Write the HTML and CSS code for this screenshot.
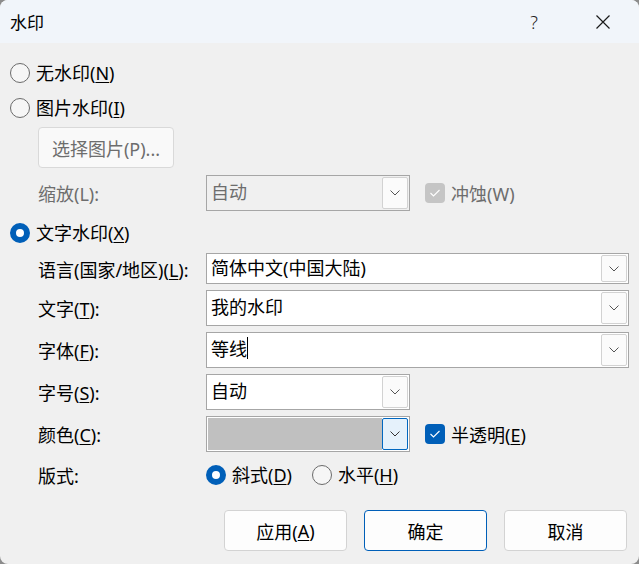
FILE: index.html
```html
<!DOCTYPE html>
<html lang="zh-CN">
<head>
<meta charset="utf-8">
<title>水印</title>
<link rel="stylesheet" href="styles.css">
</head>
<body>
<div class="window">
  <div class="titlebar">
    <span class="title">水印</span>
    <span class="help">?</span>
    <span class="close">
      <svg width="16" height="16" viewBox="0 0 16 16"><path d="M1.5 1.5 L14.5 14.5 M14.5 1.5 L1.5 14.5" stroke="#1a1a1a" stroke-width="1.2" fill="none"/></svg>
    </span>
  </div>

  <div class="content">
    <div class="opt-row r1"><span class="radio"></span><span class="opt-text">无水印(<u>N</u>)</span></div>
    <div class="opt-row r2"><span class="radio"></span><span class="opt-text">图片水印(<u>I</u>)</span></div>

    <div class="pic-row"><span class="btn btn-disabled pic-btn">选择图片(P)...</span></div>

    <div class="form-row scale-row">
      <span class="label disabled">缩放(L):</span>
      <div class="combo narrow disabled-combo">
        <span class="combo-text">自动</span>
        <span class="drop"><svg width="10" height="6" viewBox="0 0 10 6"><path d="M0.5 0.5 L5 5 L9.5 0.5" stroke="#555" stroke-width="1" fill="none"/></svg></span>
      </div>
      <span class="check check-disabled"><svg width="12" height="10" viewBox="0 0 12 10"><path d="M1.5 5 L4.5 8 L10.5 2" stroke="#fff" stroke-width="1.1" fill="none"/></svg></span>
      <span class="check-text disabled">冲蚀(W)</span>
    </div>

    <div class="opt-row r3"><span class="radio on"></span><span class="opt-text">文字水印(<u>X</u>)</span></div>

    <div class="form-row lang-row">
      <span class="label">语言(国家/地区)(<u>L</u>):</span>
      <div class="combo wide short">
        <span class="combo-text">简体中文(中国大陆)</span>
        <span class="drop"><svg width="10" height="6" viewBox="0 0 10 6"><path d="M0.5 0.5 L5 5 L9.5 0.5" stroke="#555" stroke-width="1" fill="none"/></svg></span>
      </div>
    </div>

    <div class="form-row field-row">
      <span class="label">文字(<u>T</u>):</span>
      <div class="combo wide">
        <span class="combo-text">我的水印</span>
        <span class="drop"><svg width="10" height="6" viewBox="0 0 10 6"><path d="M0.5 0.5 L5 5 L9.5 0.5" stroke="#555" stroke-width="1" fill="none"/></svg></span>
      </div>
    </div>

    <div class="form-row field-row">
      <span class="label">字体(<u>F</u>):</span>
      <div class="combo wide">
        <span class="combo-text">等线<span class="caret"></span></span>
        <span class="drop"><svg width="10" height="6" viewBox="0 0 10 6"><path d="M0.5 0.5 L5 5 L9.5 0.5" stroke="#555" stroke-width="1" fill="none"/></svg></span>
      </div>
    </div>

    <div class="form-row field-row">
      <span class="label">字号(<u>S</u>):</span>
      <div class="combo narrow">
        <span class="combo-text">自动</span>
        <span class="drop"><svg width="10" height="6" viewBox="0 0 10 6"><path d="M0.5 0.5 L5 5 L9.5 0.5" stroke="#555" stroke-width="1" fill="none"/></svg></span>
      </div>
    </div>

    <div class="form-row field-row">
      <span class="label">颜色(<u>C</u>):</span>
      <div class="combo narrow color-combo">
        <span class="swatch"></span>
        <span class="drop focused"><svg width="10" height="6" viewBox="0 0 10 6"><path d="M0.5 0.5 L5 5 L9.5 0.5" stroke="#333" stroke-width="1" fill="none"/></svg></span>
      </div>
      <span class="check check-on"><svg width="12" height="10" viewBox="0 0 12 10"><path d="M1.5 5 L4.5 8 L10.5 2" stroke="#fff" stroke-width="1.1" fill="none"/></svg></span>
      <span class="check-text">半透明(<u>E</u>)</span>
    </div>

    <div class="form-row layout-row">
      <span class="label">版式:</span>
      <span class="radio on"></span><span class="opt-text">斜式(<u>D</u>)</span>
      <span class="radio second"></span><span class="opt-text">水平(<u>H</u>)</span>
    </div>

    <div class="actions">
      <span class="btn">应用(<u>A</u>)</span>
      <span class="btn btn-default">确定</span>
      <span class="btn">取消</span>
    </div>
  </div>
</div>
</body>
</html>
```

FILE: styles.css
```css
html, body {
  margin: 0;
  padding: 0;
  background: #8c8c8c;
}

body {
  font-family: "Noto Sans", "Noto Sans CJK SC", sans-serif;
  font-size: 18px;
  color: #000;
}

u {
  text-decoration: underline;
  text-underline-offset: 2px;
  text-decoration-thickness: 1px;
}

.window {
  width: 639px;
  height: 564px;
  background: #f0f0f0;
  border-radius: 8px;
  overflow: hidden;
  display: flex;
  flex-direction: column;
}

.titlebar {
  height: 43px;
  flex: none;
  background: #f1f5fa;
  display: flex;
  align-items: center;
  padding-left: 10px;
}

.title {
  font-size: 17px;
  flex: 1;
}

.help {
  font-size: 18px;
  color: #222;
  width: 20px;
  text-align: center;
  margin-right: 51px;
  font-weight: 300;
}

.close {
  display: flex;
  width: 16px;
  height: 16px;
  margin-right: 28px;
}

.content {
  display: flex;
  flex-direction: column;
}

.opt-row {
  display: flex;
  align-items: center;
  height: 22px;
  padding-left: 10px;
}

.r1 { margin-top: 19px; }
.r2 { margin-top: 13px; }
.r3 { margin-top: 11px; }

.radio {
  width: 20px;
  height: 20px;
  box-sizing: border-box;
  border-radius: 50%;
  border: 1px solid #6b6b6b;
  background: #f6f6f6;
  flex: none;
}

.radio.on {
  border: 6px solid #005fb8;
  background: #fff;
}

.opt-text {
  margin-left: 6px;
  line-height: 22px;
  white-space: nowrap;
}

.radio.second {
  margin-left: 20px;
}

.pic-row {
  margin-top: 8px;
  padding-left: 38px;
  display: flex;
}

.btn {
  display: flex;
  align-items: center;
  justify-content: center;
  box-sizing: border-box;
  height: 41px;
  width: 123px;
  background: #fdfdfd;
  border: 1px solid #d3d3d3;
  border-radius: 4px;
  white-space: nowrap;
}

.btn-disabled {
  color: #6d6d6d;
  background: #f9f9f9;
  border-color: #d9d9d9;
}

.pic-btn {
  width: 136px;
  height: 41px;
}

.btn-default {
  border-color: #005fb8;
}

.form-row {
  display: flex;
  align-items: center;
  padding-left: 38px;
  margin-top: 6px;
  height: 36px;
}

.scale-row { margin-top: 7px; }
.lang-row { margin-top: 9px; height: 31px; }
.layout-row { margin-top: 12px; height: 22px; }

.label {
  width: 168px;
  flex: none;
  white-space: nowrap;
}

.disabled {
  color: #6d6d6d;
}

.combo {
  box-sizing: border-box;
  height: 36px;
  border: 1px solid #a6a6a6;
  background: #fff;
  display: flex;
  align-items: center;
  padding: 1px;
  flex: none;
}

.combo.narrow { width: 204px; }
.combo.wide { width: 423px; }
.combo.short { height: 31px; }

.disabled-combo {
  background: #f0f0f0;
  color: #6d6d6d;
}

.combo-text {
  flex: 1;
  padding-left: 3px;
  margin-top: -4px;
  white-space: nowrap;
  display: flex;
  align-items: center;
}

.caret {
  display: inline-block;
  width: 1px;
  height: 22px;
  background: #000;
}

.drop {
  box-sizing: border-box;
  width: 26px;
  height: 100%;
  flex: none;
  border: 1px solid #d2d2d2;
  border-radius: 2px;
  background: #fbfbfb;
  display: flex;
  align-items: center;
  justify-content: center;
}

.drop.focused {
  border-color: #0067c0;
  background: #e5f1fb;
}

.swatch {
  flex: 1;
  height: 100%;
  background: #c0c0c0;
}

.check {
  width: 20px;
  height: 20px;
  border-radius: 4px;
  margin-left: 15px;
  display: flex;
  align-items: center;
  justify-content: center;
  flex: none;
}

.check-disabled { background: #c5c5c5; }
.check-on { background: #005fb8; }

.check-text {
  margin-left: 6px;
  white-space: nowrap;
}

.actions {
  display: flex;
  justify-content: flex-end;
  gap: 17px;
  padding-right: 12px;
  margin-top: 24px;
}
```
